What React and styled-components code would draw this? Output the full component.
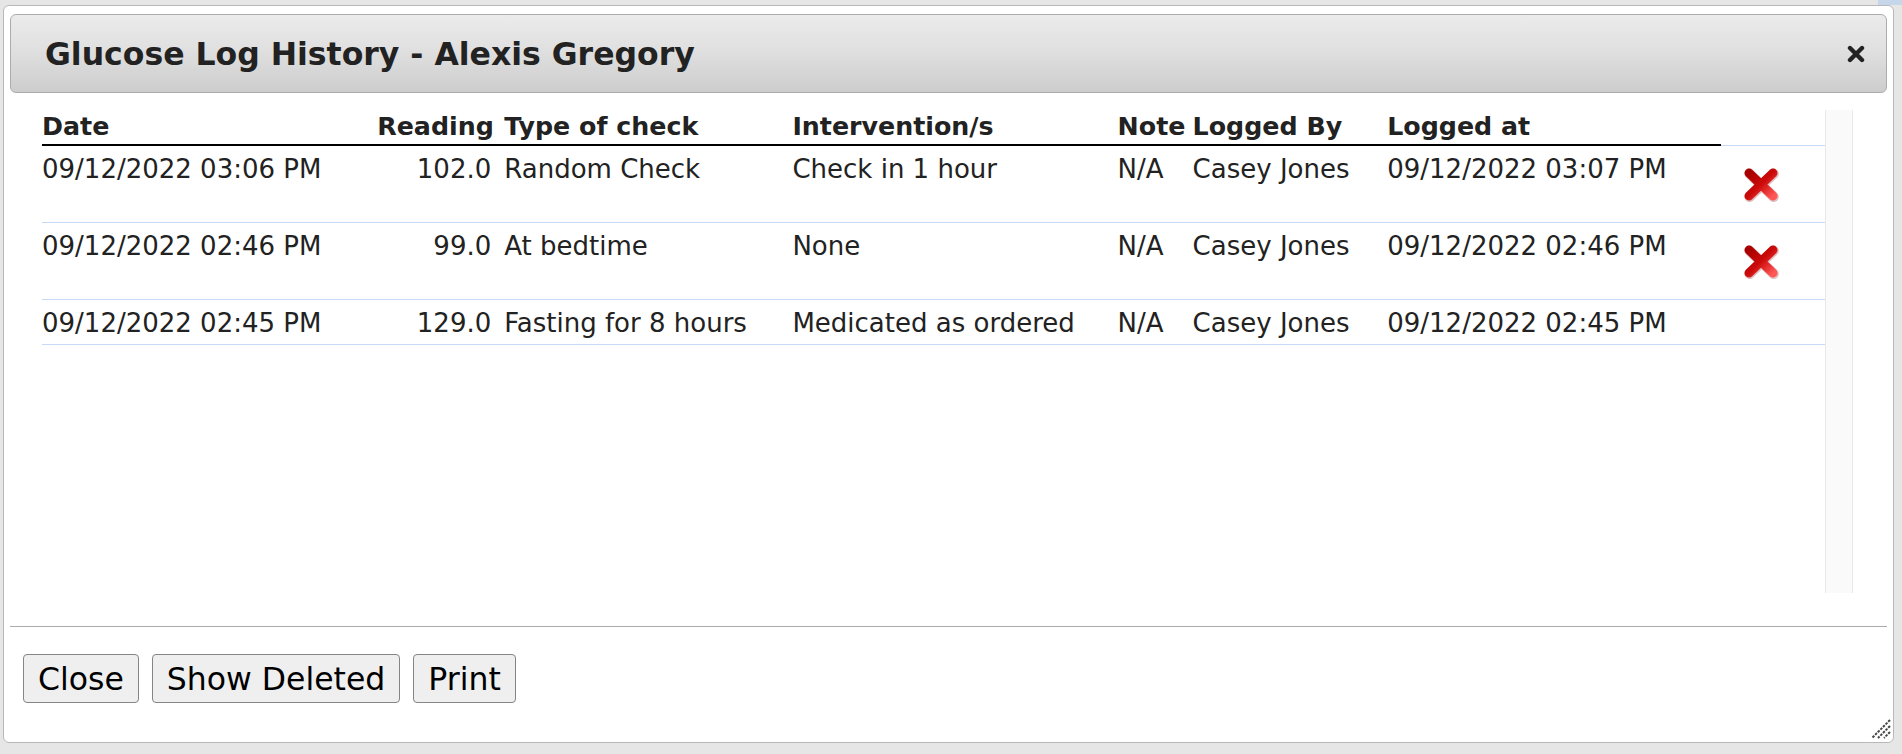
import styled, { createGlobalStyle } from "styled-components";

const GlobalStyle = createGlobalStyle`
  html, body {
    margin: 0;
    height: 754px;
    overflow: hidden;
    background: linear-gradient(#c6d6eb, #c6d6eb) no-repeat right top / 24px 5px, #e6e6e6;
    font-family: "DejaVu Sans", Verdana, sans-serif;
    color: #222;
  }
`;

const rows = [
  {
    date: "09/12/2022 03:06 PM",
    reading: "102.0",
    type: "Random Check",
    intervention: "Check in 1 hour",
    note: "N/A",
    by: "Casey Jones",
    at: "09/12/2022 03:07 PM",
    deletable: true,
  },
  {
    date: "09/12/2022 02:46 PM",
    reading: "99.0",
    type: "At bedtime",
    intervention: "None",
    note: "N/A",
    by: "Casey Jones",
    at: "09/12/2022 02:46 PM",
    deletable: true,
  },
  {
    date: "09/12/2022 02:45 PM",
    reading: "129.0",
    type: "Fasting for 8 hours",
    intervention: "Medicated as ordered",
    note: "N/A",
    by: "Casey Jones",
    at: "09/12/2022 02:45 PM",
    deletable: false,
  },
];

const columns = [335, 127, 288, 325, 75, 194.5, 333.5, 104];

const CloseIcon = () => (
  <svg width="18" height="18" viewBox="0 0 18 18">
    <path d="M3 3 L15 15 M15 3 L3 15" stroke="#222" strokeWidth="4.4" strokeLinecap="round" />
  </svg>
);

const DeleteIcon = () => (
  <svg width="36" height="35" viewBox="0 0 36 35" style={{ display: "block" }}>
    <defs>
      <linearGradient id="redx" x1="0" y1="0" x2="1" y2="1">
        <stop offset="0" stopColor="#a80000" />
        <stop offset="0.5" stopColor="#cc0a0a" />
        <stop offset="1" stopColor="#ff5656" />
      </linearGradient>
    </defs>
    <path d="M6 6 L30 29 M30 6 L6 29" stroke="#7a0000" strokeOpacity="0.25" strokeWidth="10.5" strokeLinecap="round" transform="translate(0.6 0.8)" />
    <path d="M6 6 L30 29 M30 6 L6 29" stroke="url(#redx)" strokeWidth="9" strokeLinecap="round" />
  </svg>
);

const Grip = () => (
  <svg width="22" height="22" viewBox="0 0 22 22">
    <path d="M21 3 L3 21 M21 9 L9 21 M21 15 L15 21" stroke="#444" strokeWidth="2" strokeDasharray="2.5 1.2" />
  </svg>
);

const App = () => {
  return (
    <>
      <GlobalStyle />
      <Dialog>
        <TitleBar>
          <Title>Glucose Log History - Alexis Gregory</Title>
          <CloseButton>
            <CloseIcon />
          </CloseButton>
        </TitleBar>

        <Content>
          <TableArea>
            <Table>
              <colgroup>
                {columns.map((w, i) => (
                  <col key={i} style={{ width: w }} />
                ))}
              </colgroup>
              <thead>
                <tr>
                  <Th>Date</Th>
                  <Th $right>Reading</Th>
                  <Th>Type of check</Th>
                  <Th>Intervention/s</Th>
                  <Th>Note</Th>
                  <Th>Logged By</Th>
                  <Th>Logged at</Th>
                  <Th $blank></Th>
                </tr>
              </thead>
              <tbody>
                {rows.map((r, i) => (
                  <tr key={i}>
                    <Td>{r.date}</Td>
                    <Td $right>{r.reading}</Td>
                    <Td>{r.type}</Td>
                    <Td>{r.intervention}</Td>
                    <Td>{r.note}</Td>
                    <Td>{r.by}</Td>
                    <Td>{r.at}</Td>
                    <IconCell>{r.deletable && <DeleteIcon />}</IconCell>
                  </tr>
                ))}
              </tbody>
            </Table>
          </TableArea>
          <ScrollTrack />
        </Content>

        <ButtonPane>
          <Button>Close</Button>
          <Button>Show Deleted</Button>
          <Button>Print</Button>
        </ButtonPane>

        <Resize>
          <Grip />
        </Resize>
      </Dialog>
    </>
  );
};

const Dialog = styled.div`
  position: relative;
  box-sizing: border-box;
  width: 1891px;
  margin: 5px 0 0 3px;
  padding: 8px 6px 0;
  background: #fff;
  border: 1px solid #b8b8b8;
  border-radius: 6px;
`;

const TitleBar = styled.div`
  box-sizing: border-box;
  height: 79px;
  display: flex;
  align-items: center;
  justify-content: space-between;
  padding: 0 21px 0 34px;
  border: 1px solid #acacac;
  border-radius: 6px;
  background: linear-gradient(#ebebeb 0%, #e0e0e0 45%, #cdcdcd 100%);
`;

const Title = styled.span`
  font-size: 31.5px;
  font-weight: bold;
  color: #222;
  line-height: 1;
  margin-top: 2px;
`;

const CloseButton = styled.span`
  display: flex;
  width: 18px;
  height: 18px;
`;

const Content = styled.div`
  display: flex;
  margin: 17px 34px 0 32px;
  height: 483px;
`;

const TableArea = styled.div`
  flex: 1;
  min-width: 0;
`;

const ScrollTrack = styled.div`
  box-sizing: border-box;
  width: 28px;
  background: #fafafa;
  border-left: 1px solid #e8e8e8;
  border-right: 1px solid #e8e8e8;
`;

const Table = styled.table`
  width: 100%;
  table-layout: fixed;
  border-collapse: collapse;
  font-size: 26px;
  line-height: 30px;
`;

const Th = styled.th`
  padding: 2px ${(p) => (p.$right ? "13px" : "4px")} 2px 0;
  text-align: ${(p) => (p.$right ? "right" : "left")};
  font-size: 25.3px;
  font-weight: bold;
  color: #222;
  white-space: nowrap;
  border-bottom: ${(p) => (p.$blank ? "none" : "2px solid #000")};
`;

const Td = styled.td`
  padding: 8px ${(p) => (p.$right ? "13px" : "4px")} 6px 0;
  text-align: ${(p) => (p.$right ? "right" : "left")};
  vertical-align: top;
  white-space: nowrap;
  color: #222;
  border-top: 1px solid #c7daf7;
  tr:last-child > & {
    border-bottom: 1px solid #c7daf7;
  }
`;

const IconCell = styled(Td)`
  padding: 21px 0 20px 22px;
  &:empty {
    padding: 0;
  }
`;

const ButtonPane = styled.div`
  display: flex;
  gap: 13px;
  margin-top: 33px;
  padding: 27px 0 39px 13px;
  border-top: 1px solid #ababab;
`;

const Button = styled.button`
  box-sizing: border-box;
  height: 49px;
  padding: 0 14px;
  font-family: "DejaVu Sans", Verdana, sans-serif;
  font-size: 31.5px;
  color: #000;
  background: #efefef;
  border: 1px solid #858585;
  border-radius: 4px;
`;

const Resize = styled.div`
  position: absolute;
  right: 2px;
  bottom: 3px;
  width: 22px;
  height: 22px;
`;

export default App;
